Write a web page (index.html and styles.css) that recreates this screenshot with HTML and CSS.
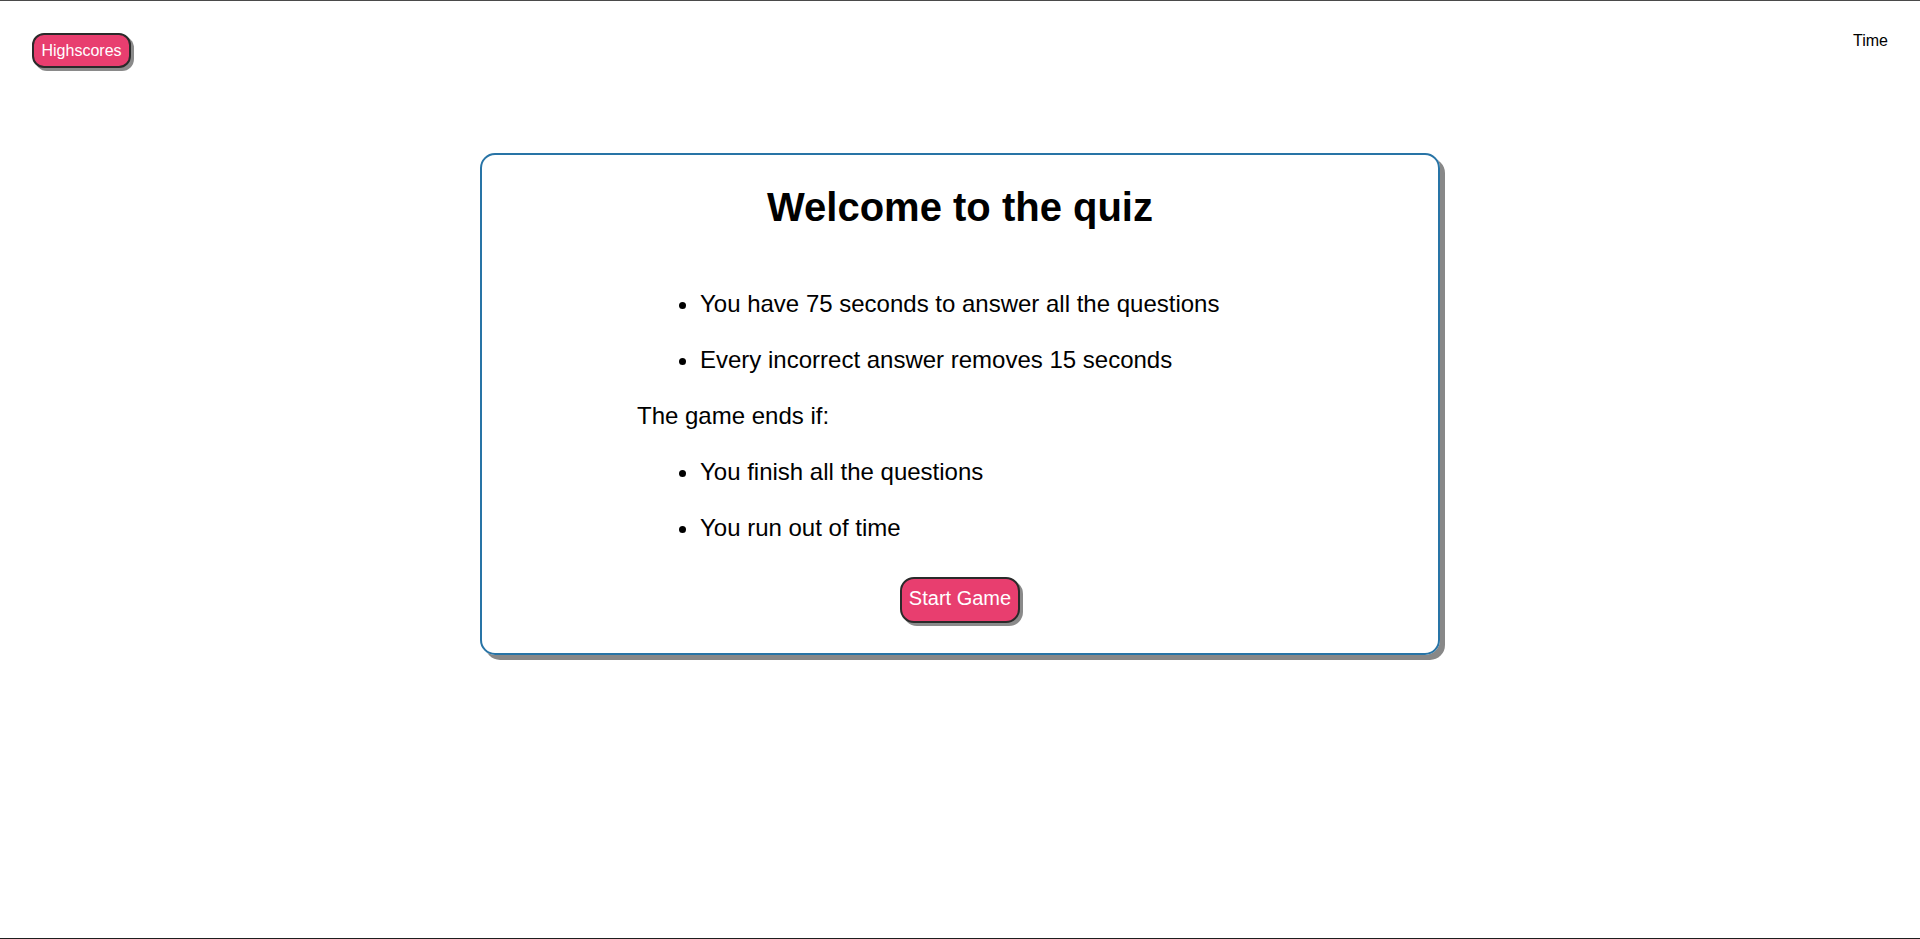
FILE: index.html
```html
<!DOCTYPE html>
<html lang="en">
<head>
<meta charset="utf-8">
<title>Quiz</title>
<link rel="stylesheet" href="styles.css">
</head>
<body>
<div class="page">
  <header class="topbar">
    <button class="btn btn-small">Highscores</button>
    <div class="timer">Time</div>
  </header>
  <main class="card">
    <h1 class="title">Welcome to the quiz</h1>
    <div class="rules">
      <ul class="rule-list">
        <li>You have 75 seconds to answer all the questions</li>
        <li>Every incorrect answer removes 15 seconds</li>
      </ul>
      <p class="rule-text">The game ends if:</p>
      <ul class="rule-list">
        <li>You finish all the questions</li>
        <li>You run out of time</li>
      </ul>
    </div>
    <div class="actions">
      <button class="btn btn-large">Start Game</button>
    </div>
  </main>
</div>
</body>
</html>
```
FILE: styles.css
```css
html, body {
  margin: 0;
  padding: 0;
}
body {
  font-family: "Liberation Sans", Arial, sans-serif;
  color: #000;
  background: #fff;
}
.page {
  box-sizing: border-box;
  height: 939px;
  border-top: 1px solid #4a4a4a;
  border-bottom: 1px solid #1e1e1e;
  overflow: hidden;
}
.topbar {
  display: flex;
  justify-content: space-between;
  align-items: flex-start;
  padding: 32px 32px 0 32px;
  height: 35px;
}
.btn {
  font-family: "Liberation Sans", Arial, sans-serif;
  background: #e83e6f;
  color: #fff;
  border: 2px solid #2a2a2a;
  box-shadow: 3px 3px 0 #8a8a8a;
  cursor: pointer;
}
.btn-small {
  font-size: 16px;
  line-height: 18px;
  padding: 6.5px 7.5px;
  border-radius: 12px;
}
.btn-large {
  font-size: 20px;
  line-height: 23px;
  padding: 8px 7px 11px;
  border-radius: 14px;
}
.timer {
  font-size: 16px;
  line-height: 18px;
  margin-top: -1px;
}
.card {
  box-sizing: border-box;
  width: 960px;
  margin: 85px auto 0;
  border: 2px solid #2874a6;
  border-radius: 15px;
  box-shadow: 5px 5px 0 #888;
  padding: 29px 0 30px;
}
.title {
  margin: 0;
  text-align: center;
  font-size: 40px;
  line-height: 46px;
  font-weight: bold;
}
.rules {
  display: flex;
  flex-direction: column;
  gap: 28px;
  margin: 60px 0 0 155px;
  font-size: 24px;
  line-height: 28px;
}
.rule-list {
  display: flex;
  flex-direction: column;
  gap: 28px;
  margin: 0;
  padding-left: 63px;
}
.rule-text {
  margin: 0;
}
.actions {
  display: flex;
  justify-content: center;
  margin-top: 35px;
}
```
